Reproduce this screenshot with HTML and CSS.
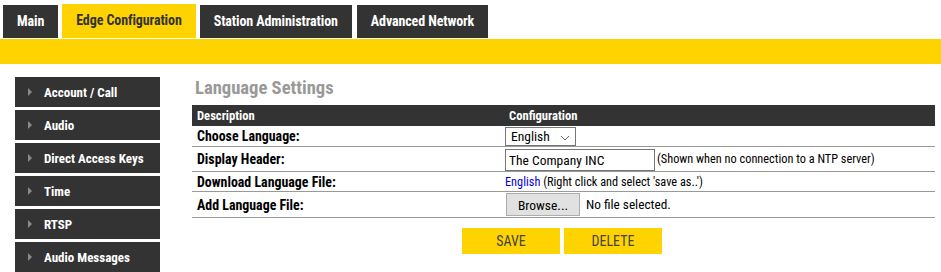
FILE: index.html
```
<!DOCTYPE html>
<html>
<head>
<meta charset="utf-8">
<title>Language Settings</title>
<link rel="stylesheet" href="styles.css">
</head>
<body>
<nav class="tabs">
  <a class="tab">Main</a>
  <a class="tab active">Edge Configuration</a>
  <a class="tab">Station Administration</a>
  <a class="tab">Advanced Network</a>
</nav>
<div class="bar"></div>
<div class="main">
  <aside class="side">
    <a class="item"><span class="tri"></span>Account / Call</a>
    <a class="item"><span class="tri"></span>Audio</a>
    <a class="item"><span class="tri"></span>Direct Access Keys</a>
    <a class="item"><span class="tri"></span>Time</a>
    <a class="item"><span class="tri"></span>RTSP</a>
    <a class="item"><span class="tri"></span>Audio Messages</a>
  </aside>
  <section class="content">
    <h1 class="title">Language Settings</h1>
    <div class="grid">
      <div class="row head">
        <div class="c1">Description</div>
        <div class="c2 hc2">Configuration</div>
      </div>
      <div class="row r1">
        <div class="c1">Choose Language:</div>
        <div class="c2">
          <div class="sel">
            <span class="seltxt">English</span>
            <svg class="chev" width="10" height="6" viewBox="0 0 10 6"><path d="M1 1 L5 5 L9 1" fill="none" stroke="#666" stroke-width="1"/></svg>
          </div>
        </div>
      </div>
      <div class="row r2">
        <div class="c1">Display Header:</div>
        <div class="c2">
          <div class="inp">The Company INC</div>
          <span class="note">(Shown when no connection to a NTP server)</span>
        </div>
      </div>
      <div class="row r3">
        <div class="c1">Download Language File:</div>
        <div class="c2"><a class="link">English</a>&nbsp;(Right click and select 'save as..')</div>
      </div>
      <div class="row r4">
        <div class="c1">Add Language File:</div>
        <div class="c2">
          <div class="browse">Browse...</div>
          <span class="nofile">No file selected.</span>
        </div>
      </div>
    </div>
    <div class="actions">
      <div class="btn">SAVE</div>
      <div class="btn">DELETE</div>
    </div>
  </section>
</div>
</body>
</html>
```
FILE: styles.css
```
* { box-sizing: border-box; }
body {
  margin: 0;
  font-family: "Roboto Condensed", Roboto, sans-serif;
  font-stretch: condensed;
  color: #000;
  background: #fff;
}
.tabs {
  display: flex;
  align-items: flex-end;
  gap: 4px;
  padding: 0 0 0 3px;
  height: 38px;
}
.tab {
  display: flex;
  align-items: center;
  justify-content: center;
  height: 33px;
  padding: 0 14px 1px;
  background: #333333;
  color: #fff;
  font-size: 14px;
  font-weight: 700;
  letter-spacing: -0.1px;
}
.tab.active {
  background: #ffd300;
  color: #333;
  height: 34px;
  padding: 0 14px 3px;
}
.tab:last-child { margin-left: 1px; }
.bar {
  margin-top: 1px;
  height: 25px;
  background: #ffd300;
}
.main {
  display: flex;
  padding: 13px 6px 0 15px;
}
.side {
  width: 145px;
  display: flex;
  flex-direction: column;
  gap: 3px;
  flex: none;
}
.item {
  display: flex;
  align-items: center;
  height: 30px;
  background: #333333;
  color: #fff;
  font-size: 13px;
  font-weight: 700;
  padding-left: 13px;
}
.tri {
  width: 0; height: 0;
  border-left: 4px solid #8a8a8a;
  border-top: 4px solid transparent;
  border-bottom: 4px solid transparent;
  margin-right: 12px;
}
.content {
  flex: 1;
  margin-left: 32px;
}
.title {
  margin: 0 0 0 3px;
  height: 28px;
  font-size: 18.6px;
  font-weight: 700;
  color: #999;
  line-height: 22px;
}
.row {
  display: flex;
  align-items: center;
  border-bottom: 1px solid #999;
  font-size: 12.3px;
}
.row .c1 {
  width: 313px;
  flex: none;
  padding-left: 5px;
  font-weight: 700;
  font-size: 13.9px;
}
.row .c2 {
  display: flex;
  align-items: center;
}
.head {
  height: 21px;
  background: #333333;
  color: #fff;
  border-bottom: none;
}
.head .c1, .head .hc2 { font-weight: 700; font-size: 12.6px; }
.head .hc2 { padding-left: 4px; }
.r1 { height: 21px; }
.r2 { height: 25px; }
.r3 { height: 20px; }
.r4 { height: 26px; }
.sel {
  position: relative;
  width: 71px;
  height: 19px;
  border: 1px solid #767676;
  display: flex;
  align-items: center;
  padding-left: 5px;
  font-size: 13.5px;
}
.chev {
  position: absolute;
  right: 5px;
  top: 7px;
}
.inp {
  width: 150px;
  height: 22px;
  border: 1px solid #767676;
  display: flex;
  align-items: center;
  padding-left: 3px;
  font-size: 13.5px;
  margin-top: 1px;
}
.note { margin-left: 2px; }
.link { color: #0000ee; }
.browse {
  width: 74px;
  height: 23px;
  margin-left: 1px;
  background: #e1e1e1;
  border: 1px solid #adadad;
  display: flex;
  align-items: center;
  justify-content: center;
  font-size: 13.5px;
}
.nofile {
  margin-left: 6px;
  font-size: 13.3px;
}
.actions {
  display: flex;
  justify-content: center;
  gap: 4px;
  margin-top: 10px;
  padding-right: 3px;
}
.btn {
  width: 98px;
  height: 26px;
  background: #ffd300;
  color: #444;
  font-size: 14px;
  font-weight: 400;
  display: flex;
  align-items: center;
  justify-content: center;
}
```
